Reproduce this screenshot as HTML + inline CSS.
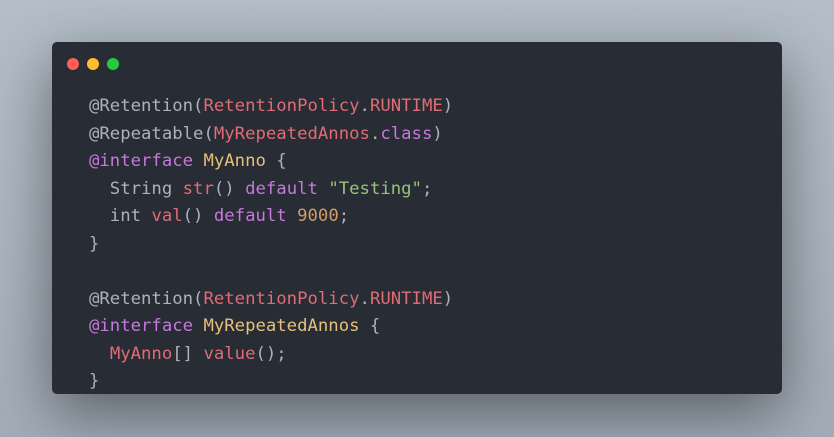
<!DOCTYPE html>
<html><head><meta charset="utf-8"><style>
html,body{margin:0;padding:0}
body{width:834px;height:437px;background:linear-gradient(180deg,#b4bec8,#a2adb8);overflow:hidden;position:relative}
.card{position:absolute;left:52px;top:42px;width:730px;height:352px;background:#282c34;border-radius:5px;box-shadow:0 20px 60px rgba(0,0,0,.45)}
.dot{position:absolute;top:16px;width:12px;height:12px;border-radius:50%}
pre{position:absolute;left:37px;top:51px;margin:0;font-family:"DejaVu Sans Mono","Liberation Mono",monospace;font-size:17.3px;line-height:27.5px;color:#abb2bf}
.r{color:#e06c75}.p{color:#c678dd}.y{color:#e5c07b}.g{color:#98c379}.o{color:#d19a66}
</style></head><body>
<div class="card">
<div class="dot" style="left:15px;background:#ff5f56"></div>
<div class="dot" style="left:35px;background:#ffbd2e"></div>
<div class="dot" style="left:55px;background:#27c93f"></div>
<pre>@Retention(<span class="r">RetentionPolicy</span>.<span class="r">RUNTIME</span>)
@Repeatable(<span class="r">MyRepeatedAnnos</span>.<span class="p">class</span>)
<span class="p">@interface</span> <span class="y">MyAnno</span> {
  String <span class="r">str</span>() <span class="p">default</span> <span class="g">"Testing"</span>;
  int <span class="r">val</span>() <span class="p">default</span> <span class="o">9000</span>;
}

@Retention(<span class="r">RetentionPolicy</span>.<span class="r">RUNTIME</span>)
<span class="p">@interface</span> <span class="y">MyRepeatedAnnos</span> {
  <span class="r">MyAnno</span>[] <span class="r">value</span>();
}</pre>
</div>
</body></html>
